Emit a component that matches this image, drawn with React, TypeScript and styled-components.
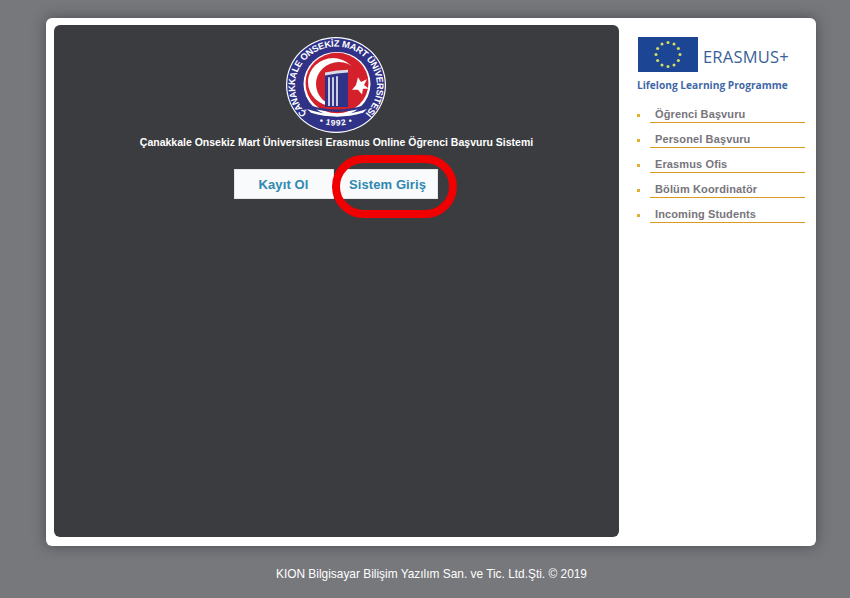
import React from "react";
import styled, { createGlobalStyle } from "styled-components";

const links = ["Öğrenci Başvuru", "Personel Başvuru", "Erasmus Ofis", "Bölüm Koordinatör", "Incoming Students"];

const stars = Array.from({ length: 12 }, (_, i) => {
  const a = (i * Math.PI) / 6;
  return { x: 30 + Math.sin(a) * 12, y: 17.5 + Math.cos(a) * 12 };
});

export default function App() {
  return (
    <>
      <GlobalStyle />
      <Card>
        <MainPanel>
          <UniLogo viewBox="0 0 100 100" preserveAspectRatio="none">
            <circle cx="50" cy="50" r="50" fill="#fff" />
            <circle cx="50" cy="50" r="48.8" fill="#2f3287" />
            <circle cx="51" cy="49" r="33.5" fill="#fff" />
            <circle cx="51" cy="48" r="31.5" fill="#d3202a" />
            <circle cx="47" cy="47" r="25" fill="#fff" />
            <circle cx="53" cy="49" r="23" fill="#d3202a" />
            <path d="M39 39 l11 -2 12 -1 0 37 -23 0z" fill="#2f3287" />
            <path d="M39 37 l12 -2 11 -1 0 3 -11 1 -12 2z" fill="#d9dbe8" />
            <path d="M43 42 v30 M47 42 v30 M51 41 v31" stroke="#fff" strokeWidth="1.5" fill="none" />
            <path d="M24 71 q27 9 54 0 v2.5 q-27 9 -54 0z" fill="#2f3287" />
            <path d="M21 75 q30 11 60 0 l-4 4 q-26 8 -52 0z" fill="#fff" />
            <polygon points="72,42 75,47 81,44 78,50 83,54 77,54 76,60 72,55 66,55 70,50" fill="#fff" />
            <defs>
              <path id="ringTop" d="M21.5 80.5 A41 41 0 1 1 78.5 80.5" />
              <path id="ringBottom" d="M12 72 A45.5 45.5 0 0 0 88 72" />
            </defs>
            <RingText>
              <textPath href="#ringTop" startOffset="50%" textAnchor="middle" textLength="192" lengthAdjust="spacing">ÇANAKKALE ONSEKİZ MART ÜNİVERSİTESİ</textPath>
            </RingText>
            <YearText>
              <textPath href="#ringBottom" startOffset="50%" textAnchor="middle">• 1992 •</textPath>
            </YearText>
          </UniLogo>
          <Heading>Çanakkale Onsekiz Mart Üniversitesi Erasmus Online Öğrenci Başvuru Sistemi</Heading>
          <ButtonRow>
            <ActionButton>Kayıt Ol</ActionButton>
            <ActionButton>Sistem Giriş</ActionButton>
            <Ring />
          </ButtonRow>
        </MainPanel>
        <Sidebar>
          <EuRow>
            <svg width="60" height="35" viewBox="0 0 60 35">
              <rect width="60" height="35" fill="#1c4594" />
              {stars.map((s, i) => (
                <circle key={i} cx={s.x} cy={s.y} r="1.5" fill="#d8e05a" />
              ))}
            </svg>
            <EuName>ERASMUS+</EuName>
          </EuRow>
          <Programme>Lifelong Learning Programme</Programme>
          <Menu>
            {links.map((l) => (
              <MenuItem key={l}>
                <Bullet />
                <MenuLink>{l}</MenuLink>
              </MenuItem>
            ))}
          </Menu>
        </Sidebar>
      </Card>
      <Footer>KION Bilgisayar Bilişim Yazılım San. ve Tic. Ltd.Şti. © 2019</Footer>
    </>
  );
}

const GlobalStyle = createGlobalStyle`
  html, body {
    margin: 0;
    height: 598px;
    overflow: hidden;
    background: #77787c;
    font-family: "Liberation Sans", Arial, sans-serif;
  }
`;

const Card = styled.div`
  width: 770px;
  height: 528px;
  margin: 18px 0 0 46px;
  padding: 7px 0 9px 8px;
  box-sizing: border-box;
  display: flex;
  background: #fff;
  border-radius: 6px;
  box-shadow: 0 0 14px rgba(50, 50, 52, 0.65);
`;

const MainPanel = styled.div`
  width: 565px;
  display: flex;
  flex-direction: column;
  align-items: center;
  padding-top: 12px;
  box-sizing: border-box;
  background: #3b3c3f;
  border-radius: 6px;
`;

const UniLogo = styled.svg`
  width: 100px;
  height: 96px;
  margin-right: 1px;
`;

const RingText = styled.text`
  fill: #fff;
  font-family: "Liberation Sans", Arial, sans-serif;
  font-size: 9.4px;
  font-weight: 700;
`;

const YearText = styled(RingText)`
  font-size: 8.6px;
  letter-spacing: 0.6px;
`;

const Heading = styled.div`
  margin-top: 2px;
  color: #fff;
  font-size: 10.5px;
  font-weight: 700;
  line-height: 15px;
  white-space: nowrap;
`;

const ButtonRow = styled.div`
  position: relative;
  display: flex;
  gap: 4px;
  margin: 19px 2px 0 0;
`;

const ActionButton = styled.div`
  width: 100px;
  height: 30px;
  display: flex;
  align-items: center;
  justify-content: center;
  box-sizing: border-box;
  border: 1px solid #e4e6e8;
  background: #f8fafb;
  color: #2e88b0;
  font-size: 13px;
  font-weight: 700;
  letter-spacing: 0.1px;
`;

const Ring = styled.div`
  position: absolute;
  left: 98px;
  top: -14px;
  width: 125px;
  height: 63px;
  box-sizing: border-box;
  border: 8px solid #f00000;
  border-radius: 32px;
`;

const Sidebar = styled.div`
  flex: 1;
  padding: 12px 11px 0 18px;
`;

const EuRow = styled.div`
  display: flex;
  align-items: flex-end;
  gap: 5px;
  margin-left: 1px;
`;

const EuName = styled.span`
  margin-bottom: 5px;
  color: #3b5f99;
  font-family: "Open Sans", sans-serif;
  font-size: 16.5px;
  line-height: 21px;
  letter-spacing: 0.2px;
`;

const Programme = styled.div`
  margin-top: 6px;
  color: #3f68a8;
  font-family: "Open Sans", sans-serif;
  font-size: 10.2px;
  font-weight: 700;
  line-height: 14px;
  white-space: nowrap;
`;

const Menu = styled.div`
  margin-top: 15px;
  display: flex;
  flex-direction: column;
  gap: 9px;
`;

const MenuItem = styled.div`
  display: flex;
  align-items: center;
`;

const Bullet = styled.span`
  width: 3px;
  height: 3px;
  margin-right: 10px;
  background: #e0b030;
`;

const MenuLink = styled.div`
  flex: 1;
  height: 15px;
  padding-left: 5px;
  border-bottom: 1px solid #dc9a20;
  color: #77757b;
  font-size: 11px;
  font-weight: 700;
  line-height: 15px;
  letter-spacing: 0.12px;
`;

const Footer = styled.div`
  margin-top: 20px;
  padding-left: 13px;
  text-align: center;
  color: #fff;
  font-size: 11.9px;
  line-height: 16px;
`;
